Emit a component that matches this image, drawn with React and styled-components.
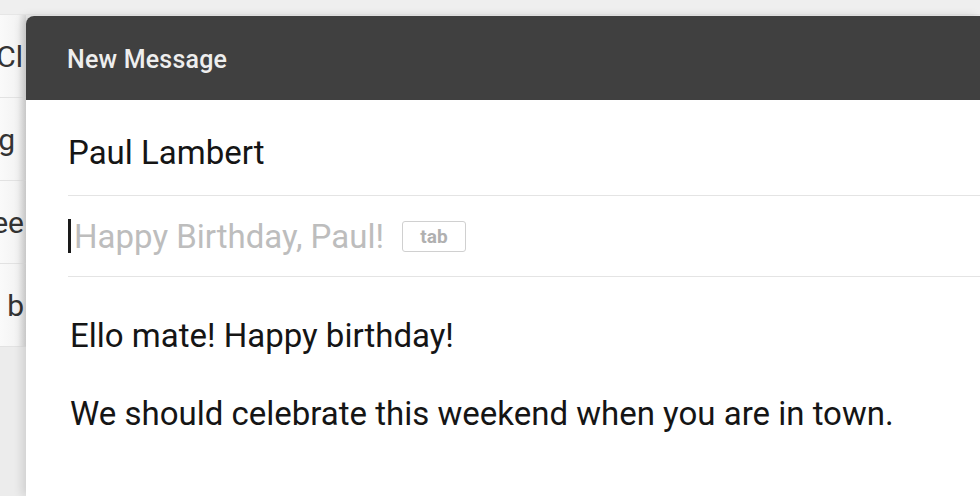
import React from "react";
import styled, { createGlobalStyle } from "styled-components";

const GlobalStyle = createGlobalStyle`
  html, body {
    margin: 0;
    padding: 0;
    background: #f1f1f1;
  }
  body {
    font-family: Roboto, "Liberation Sans", sans-serif;
  }
`;

const Page = styled.div`
  position: relative;
  width: 980px;
  height: 496px;
  overflow: hidden;
  background: #ececec;
`;

const TopBand = styled.div`
  height: 14px;
  background: #efefef;
  border-bottom: 1px solid #e6e6e6;
`;

const InboxList = styled.div`
  width: 26px;
  overflow: hidden;
  background: linear-gradient(to right, #fafafa 0%, #f3f3f3 70%, #dcdcdc 100%);
`;

const InboxRow = styled.div`
  height: 82px;
  display: flex;
  align-items: center;
  justify-content: flex-end;
  padding-right: ${(p) => p.$pr}px;
  border-bottom: 1px solid #e2e2e2;
  font-size: 30px;
  color: #333;
  white-space: nowrap;
`;

const Compose = styled.div`
  position: absolute;
  left: 26px;
  top: 16px;
  right: 0;
  bottom: 0;
  background: #fff;
  border-top-left-radius: 8px;
  box-shadow: -4px 0 10px rgba(0, 0, 0, 0.12);
  display: flex;
  flex-direction: column;
`;

const Header = styled.div`
  height: 84px;
  background: #404040;
  border-top-left-radius: 8px;
  display: flex;
  align-items: center;
  padding-left: 41px;
  padding-top: 2px;
  box-sizing: border-box;
`;

const Title = styled.span`
  color: #eeeeee;
  font-size: 25px;
  font-weight: 500;
  letter-spacing: 0.2px;
`;

const Fields = styled.div`
  padding-left: 42px;
  display: flex;
  flex-direction: column;
`;

const Field = styled.div`
  height: ${(p) => p.$h}px;
  display: flex;
  align-items: center;
  padding-top: ${(p) => p.$pt || 0}px;
  box-sizing: border-box;
  border-bottom: 1px solid #e4e4e4;
  font-size: 33px;
  color: #151515;
`;

const Caret = styled.span`
  display: inline-block;
  width: 3px;
  height: 34px;
  background: #1a1a1a;
  margin-right: 3px;
`;

const Placeholder = styled.span`
  color: #bdbdbd;
`;

const TabKey = styled.span`
  margin-left: 18px;
  height: 29px;
  width: 62px;
  justify-content: center;
  display: inline-flex;
  align-items: center;
  border: 1.5px solid #d0d0d0;
  border-radius: 3px;
  font-size: 19px;
  font-weight: 700;
  color: #b0b0b0;
`;

const Body = styled.div`
  padding: 40px 0 0 44px;
  font-size: 33px;
  color: #151515;
`;

const Para = styled.p`
  margin: 0 0 40px;
  line-height: 38px;
`;

const inbox = [
  { text: "Cl", pr: 3 },
  { text: "g", pr: 11 },
  { text: "ee", pr: 2 },
  { text: "e b", pr: 2 },
];

export default function App() {
  return (
    <>
      <GlobalStyle />
      <Page>
        <TopBand />
        <InboxList>
          {inbox.map((row) => (
            <InboxRow key={row.text} $pr={row.pr}>
              {row.text}
            </InboxRow>
          ))}
        </InboxList>
        <Compose>
          <Header>
            <Title>New Message</Title>
          </Header>
          <Fields>
            <Field $h={96} $pt={10}>Paul Lambert</Field>
            <Field $h={81}>
              <Caret />
              <Placeholder>Happy Birthday, Paul!</Placeholder>
              <TabKey>tab</TabKey>
            </Field>
          </Fields>
          <Body>
            <Para>Ello mate! Happy birthday!</Para>
            <Para>We should celebrate this weekend when you are in town.</Para>
          </Body>
        </Compose>
      </Page>
    </>
  );
}
